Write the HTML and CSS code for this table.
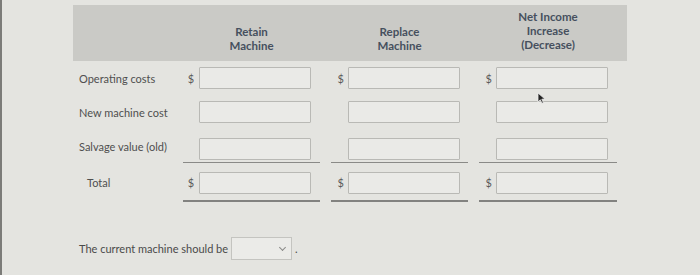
FILE: index.html
```html
<!DOCTYPE html>
<html>
<head>
    <title>Retain or Replace</title>
    <meta name="viewport" content="width=device-width, initial-scale=1">
    <link rel="stylesheet" href="styles.css">
</head>
<body>
    <div class="sheet">
        <div class="analysis">
            <div class="head-row">
                <div class="head-cell"></div>
                <div class="head-cell">Retain<br>Machine</div>
                <div class="head-cell">Replace<br>Machine</div>
                <div class="head-cell">Net Income<br>Increase<br>(Decrease)</div>
            </div>

            <div class="row">
                <div class="label">Operating costs</div>
                <div class="cell"><span class="cur">$</span><input class="amount" type="text"></div>
                <div class="cell"><span class="cur">$</span><input class="amount" type="text"></div>
                <div class="cell"><span class="cur">$</span><input class="amount" type="text"></div>
            </div>
            <div class="row">
                <div class="label">New machine cost</div>
                <div class="cell"><span class="cur"></span><input class="amount" type="text"></div>
                <div class="cell"><span class="cur"></span><input class="amount" type="text"></div>
                <div class="cell"><span class="cur"></span><input class="amount" type="text"></div>
            </div>
            <div class="row">
                <div class="label">Salvage value (old)</div>
                <div class="cell subtotal"><span class="cur"></span><input class="amount" type="text"></div>
                <div class="cell subtotal"><span class="cur"></span><input class="amount" type="text"></div>
                <div class="cell subtotal"><span class="cur"></span><input class="amount" type="text"></div>
            </div>
            <div class="row total-row">
                <div class="label indent">Total</div>
                <div class="cell total"><span class="cur">$</span><input class="amount" type="text"></div>
                <div class="cell total"><span class="cur">$</span><input class="amount" type="text"></div>
                <div class="cell total"><span class="cur">$</span><input class="amount" type="text"></div>
            </div>
        </div>

        <p class="answer">
            The current machine should be
            <span class="select"><span class="chev"></span></span>.
        </p>

        <!-- mouse pointer -->
        <svg class="pointer" width="9" height="12" viewBox="0 0 9 12">
            <path d="M1 1 L1 10 L3.3 7.8 L5 11.3 L6.4 10.6 L4.8 7.2 L8 7.1 Z" fill="#222" stroke="#eee" stroke-width="0.8"/>
        </svg>
    </div>
</body>
</html>
```

FILE: styles.css
```css
body {
    margin: 0;
    background: #e4e4e0;
    font-family: Lato, "Open Sans", sans-serif;
    color: #4b4b4b;
}
.sheet {
    position: relative;
    height: 275px;
    border-left: 2px solid #7c7c79;
    box-sizing: border-box;
    padding: 5px 0 0 71px;
}
.analysis {
    width: 554px;
}
.head-row,
.row {
    display: grid;
    grid-template-columns: 99px 137px 137px 138px;
    column-gap: 11px;
}
.head-row {
    height: 56px;
    background: #cacac6;
    padding-right: 10px;
    align-items: end;
}
.head-cell {
    text-align: center;
    font-size: 11.5px;
    font-weight: bold;
    line-height: 14px;
    color: #46505e;
    padding-bottom: 8px;
}
.head-cell:last-child {
    padding-bottom: 9px;
}
.row {
    height: 34px;
    align-items: center;
}
.label {
    font-size: 11px;
    padding-left: 6px;
    color: #4f4f4f;
    white-space: nowrap;
}
.indent {
    padding-left: 14px;
}
.cell {
    display: flex;
    align-items: center;
    height: 100%;
    box-sizing: border-box;
}
.cur {
    width: 16px;
    text-align: center;
    font-size: 11px;
    color: #5a5a5a;
}
.row .cell:nth-child(n+3) .cur {
    width: 17px;
    text-align: right;
    padding-right: 4px;
    box-sizing: border-box;
}
.amount {
    width: 112px;
    height: 22px;
    box-sizing: border-box;
    margin: 0;
    border: 1px solid #b9b9b5;
    background: #eaeae7;
    border-radius: 1px;
}
.subtotal {
    border-bottom: 1px solid #8a8a87;
    padding-top: 6px;
}
.total-row {
    height: 39px;
}
.total {
    border-bottom: 2px solid #828280;
    padding-top: 2px;
}
.answer {
    margin: 35px 0 0 6px;
    font-size: 11px;
    color: #4a4a4a;
    display: flex;
    align-items: center;
    gap: 3px;
}
.select {
    display: inline-block;
    position: relative;
    width: 61px;
    height: 23px;
    box-sizing: border-box;
    border: 1px solid #c4c4c0;
    background: #ebebe8;
}
.chev {
    position: absolute;
    right: 6px;
    top: 7px;
    width: 4px;
    height: 4px;
    border-right: 1px solid #8a8a88;
    border-bottom: 1px solid #8a8a88;
    transform: rotate(45deg);
}
.pointer {
    position: absolute;
    left: 535px;
    top: 92px;
}
```
